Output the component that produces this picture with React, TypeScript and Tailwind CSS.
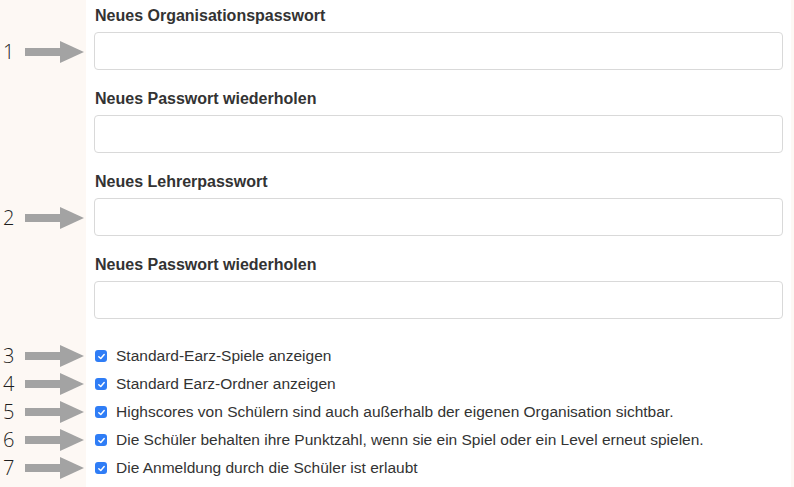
import React from "react"

const font = { fontFamily: '"Liberation Sans", Arial, sans-serif' }

function Arrow() {
  return (
    <svg width="60" height="22" viewBox="0 0 60 22" className="shrink-0">
      <rect x="0" y="7" width="37" height="8" fill="#a3a3a3" />
      <polygon points="35,0 59,11 35,22" fill="#a3a3a3" />
    </svg>
  )
}

function Marker({ n }: { n: number }) {
  return (
    <div className="flex items-center pl-[3px] gap-[9px]">
      <span className="w-[13px] text-[20px] leading-none font-light text-[#1f1f1f] font-['Open_Sans',sans-serif]">{n}</span>
      <Arrow />
    </div>
  )
}

const fields = [
  { label: "Neues Organisationspasswort", n: 1 },
  { label: "Neues Passwort wiederholen", n: 0 },
  { label: "Neues Lehrerpasswort", n: 2 },
  { label: "Neues Passwort wiederholen", n: 0 },
]

const options = [
  "Standard-Earz-Spiele anzeigen",
  "Standard Earz-Ordner anzeigen",
  "Highscores von Schülern sind auch außerhalb der eigenen Organisation sichtbar.",
  "Die Schüler behalten ihre Punktzahl, wenn sie ein Spiel oder ein Level erneut spielen.",
  "Die Anmeldung durch die Schüler ist erlaubt",
]

export default function App() {
  return (
    <div className="w-[794px] h-[487px] bg-[#fdf8f4] flex flex-col overflow-hidden" style={font}>
      {fields.map((f, i) => (
        <div key={i} className="flex shrink-0">
          <div className="w-[86px] shrink-0 flex items-end pb-[20px]">
            {f.n > 0 && <Marker n={f.n} />}
          </div>
          <div className="flex-1 mr-[3px] bg-white px-2 pt-[6px] pb-[13px]">
            <div className="text-[16px] leading-5 font-bold text-[#333] pl-[1px] mb-[6px]">{f.label}</div>
            <div className="h-[38px] rounded-[4px] border border-[#d9d9d9] bg-white" />
          </div>
        </div>
      ))}
      <div className="flex shrink-0">
        <div className="w-[86px] shrink-0" />
        <div className="flex-1 mr-[3px] bg-white h-[10px]" />
      </div>
      {options.map((o, i) => (
        <div key={o} className="flex h-[28px] shrink-0">
          <div className="w-[86px] shrink-0 flex items-center">
            <Marker n={i + 3} />
          </div>
          <div className="flex-1 mr-[3px] bg-white pl-[9px] flex items-center gap-[9px]">
            <span className="w-[12px] h-[12px] rounded-[3px] bg-[#2f7df6] flex items-center justify-center">
              <svg width="9" height="9" viewBox="0 0 10 10">
                <path d="M2 5.2 L4.2 7.3 L8 2.8" fill="none" stroke="white" strokeWidth="1.6" strokeLinecap="round" strokeLinejoin="round" />
              </svg>
            </span>
            <span className="text-[15.5px] text-[#333]">{o}</span>
          </div>
        </div>
      ))}
      <div className="flex flex-1">
        <div className="w-[86px] shrink-0" />
        <div className="flex-1 mr-[3px] bg-white" />
      </div>
    </div>
  )
}
